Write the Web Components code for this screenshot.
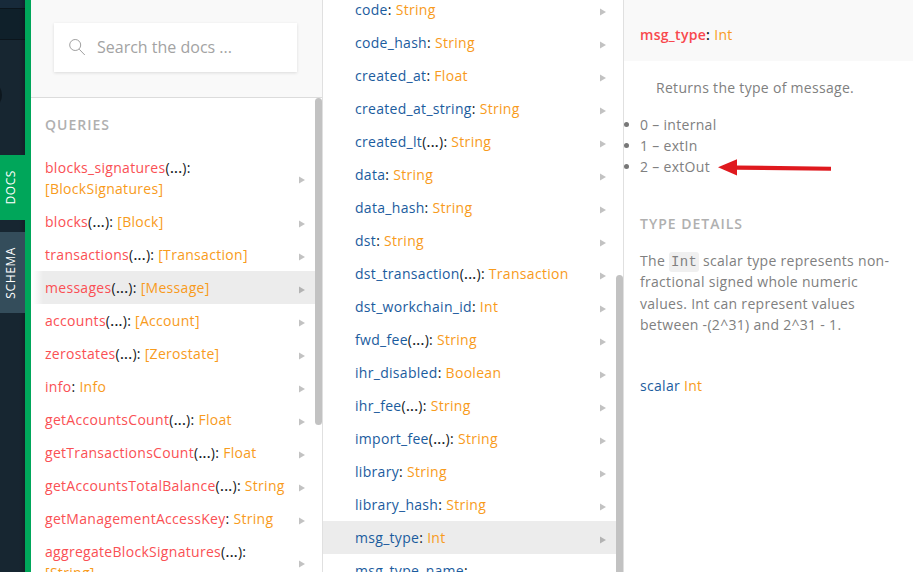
<!DOCTYPE html>
<html lang="en">
<head>
<meta charset="utf-8">
<title>Docs explorer</title>
<style>
html,body{margin:0;height:100%;overflow:hidden}
body{font-family:"Open Sans","Noto Sans",sans-serif;font-size:14px;line-height:21px;letter-spacing:.3px;color:#141823;
--field:#fa5054;--prop:#1b5c9e;--type:#f89b1c}
</style>
</head>
<body>
<docs-app></docs-app>
<script>
class Base extends HTMLElement{
  connectedCallback(){
    if(this.shadowRoot)return;
    this.attachShadow({mode:'open'}).innerHTML=this.render();
  }
}
customElements.define('side-tab',class extends Base{
  render(){return `<style>
  :host{display:flex;align-items:center;justify-content:center;width:25px;box-sizing:border-box;padding-right:3px;background:#344d5b;color:#fff;font-size:12px;line-height:18px;letter-spacing:.6px;font-weight:500}
  :host([active]){background:#00a65a}
  span{writing-mode:vertical-rl;transform:rotate(180deg)}
  </style><span><slot></slot></span>`}
});
customElements.define('side-rail',class extends Base{
  render(){return `<style>
  :host{display:flex;flex-direction:column;position:relative;width:25px;height:100%;background:linear-gradient(90deg,transparent 19px,rgba(0,0,0,.2)),linear-gradient(#172a3a 0 8px,#0b151c 8px 9px,#0f202a 9px 39px,#0b151c 39px 40px,#172631 40px);overflow:hidden;box-sizing:border-box;padding-top:155px;gap:12px}
  i{position:absolute;left:-26px;top:81px;width:28px;height:28px;border-radius:50%;background:#0d171e}
  .a{height:65px}.b{height:81px}
  </style><i></i><side-tab class="a" active>DOCS</side-tab><side-tab class="b">SCHEMA</side-tab>`}
});
customElements.define('search-box',class extends Base{
  render(){return `<style>
  :host{display:flex;box-sizing:border-box;height:98px;padding:23px 25px 25px 23px;background:#f9f9f9;border-bottom:1px solid #dcdcdc}
  .box{flex:1;height:49px;display:flex;align-items:center;background:#fff;box-shadow:0 1px 3px rgba(0,0,0,.12);font-size:16px;letter-spacing:0;color:#a3a3a3;box-sizing:border-box;padding:0 0 1px 14px;gap:10px}
  svg{width:19px;height:19px}
  </style><div class="box"><svg viewBox="0 0 19 19" fill="none" stroke="#a0a0a0" stroke-width="1"><circle cx="7.2" cy="7" r="5.5"/><path d="M11.2 11.2L16.8 17"/></svg><span><slot></slot></span></div>`}
});
customElements.define('section-title',class extends Base{
  render(){return `<style>:host{display:block;color:#b0b0b0;font-weight:600;font-size:14px;letter-spacing:1px;line-height:17px}</style><slot></slot>`}
});
/* One schema entry: name, optional arguments, type. */
customElements.define('field-row',class extends Base{
  render(){const a=this.getAttribute.bind(this);return `<style>
  :host{display:flex;align-items:center;justify-content:space-between;padding:6px 10px 6px var(--indent);box-sizing:border-box;flex:none}
  :host([selected]){background:var(--selected,#ececec)}
  .n{color:var(--name)}.t{color:var(--type)}
  svg{width:6px;height:8px;flex:none;margin-top:4px}
  </style><span><span class="n">${a('name')}</span>${this.hasAttribute('args')?'(<b style="font-weight:600;">...</b>)':''}: <span class="t">${a('type')}</span></span>
  <svg viewBox="0 0 6 8"><path d="M0 .5L6 4L0 7.5Z" fill="#000" fill-opacity=".24"/></svg>`}
});
const rows=(list,sel)=>list.trim().split('\n').map(l=>{const[n,t]=l.trim().split('|');const args=n.endsWith('+');const name=n.replace('+','');
  return `<field-row name="${name}" type="${t}"${args?' args':''}${name===sel?' selected':''}></field-row>`}).join('');
customElements.define('root-column',class extends Base{
  render(){return `<style>
  :host{display:flex;flex-direction:column;height:572px;border-right:1px solid #e0e0e0;box-sizing:border-box;overflow:hidden;background:#fff;--name:var(--field);--indent:14px;--selected:linear-gradient(90deg,#fff 2px,#ececec 12px)}
  .body{display:grid;grid-template-columns:1fr 7px;flex:1;min-height:0}
  .list{display:flex;flex-direction:column;min-width:0;overflow:hidden}
  section-title{padding:18px 14px 18px}
  .bar{height:327px;background:#c2c2c2;border-radius:4px}
  </style><search-box>Search the docs ...</search-box><div class="body"><div class="list"><section-title>QUERIES</section-title>${rows(`blocks_signatures+|[BlockSignatures]
  blocks+|[Block]
  transactions+|[Transaction]
  messages+|[Message]
  accounts+|[Account]
  zerostates+|[Zerostate]
  info|Info
  getAccountsCount+|Float
  getTransactionsCount+|Float
  getAccountsTotalBalance+|String
  getManagementAccessKey|String
  aggregateBlockSignatures+|[String]`,'messages')}</div><div class="bar"></div></div>`}
});
customElements.define('type-column',class extends Base{
  render(){return `<style>
  :host{display:grid;grid-template-columns:1fr 7px;height:572px;border-right:1px solid #e0e0e0;box-sizing:border-box;overflow:hidden;background:#fff;--name:var(--prop);--indent:32px}
  .list{display:flex;flex-direction:column;margin-top:-7px;min-width:0}
  .bar{margin-top:275px;height:320px;background:#c2c2c2;border-radius:4px}
  </style><div class="list">${rows(`code|String
  code_hash|String
  created_at|Float
  created_at_string|String
  created_lt+|String
  data|String
  data_hash|String
  dst|String
  dst_transaction+|Transaction
  dst_workchain_id|Int
  fwd_fee+|String
  ihr_disabled|Boolean
  ihr_fee+|String
  import_fee+|String
  library|String
  library_hash|String
  msg_type|Int
  msg_type_name|MessageMsgTypeNameEnum`,'msg_type')}</div><div class="bar"></div>`}
});
customElements.define('detail-column',class extends Base{
  render(){return `<style>
  :host{display:block;height:572px;overflow:hidden;background:#fff;color:#808080;position:relative}
  header{box-sizing:border-box;height:61px;padding:24px 16px 0;background:#f9f9f9;color:#141823;font-weight:600}
  .r{color:#f8484e}.t{color:var(--type)}.p{color:var(--prop)}
  p{margin:0}
  header .t{font-weight:500}
  .intro{padding:16px 32px 16px}
  ul{margin:0;padding:0 16px;list-style:none}
  li{display:flex;align-items:center}
  li::before{content:"";width:5px;height:5px;border-radius:50%;background:#777;margin-left:-16.5px;margin-right:11.5px;margin-top:-1px}
  section-title{padding:38px 16px 18px}
  .desc{padding:0 16px;line-height:21.3px}
  code{font-family:"Liberation Mono",monospace;font-size:14px;letter-spacing:.3px;line-height:16px;background:#f0f0f0;padding:2px 2px;border-radius:3px}
  .scalar{padding:40px 16px 0}
  svg{position:absolute;left:93px;top:157px;width:116px;height:20px}
  </style><header><span class="r">msg_type</span>: <span class="t">Int</span></header>
  <p class="intro">Returns the type of message.</p>
  <ul><li>0 – internal</li><li>1 – extIn</li><li>2 – extOut</li></ul>
  <section-title>TYPE DETAILS</section-title>
  <p class="desc">The <code>Int</code> scalar type represents non-<br>fractional signed whole numeric<br>values. Int can represent values<br>between -(2^31) and 2^31 - 1.</p>
  <p class="scalar"><span class="p">scalar</span> <span class="t">Int</span></p>
  <svg viewBox="0 0 116 20" fill="#df191e"><path d="M1 10.2L20 2.3V8.5L114 9.7V13.7L20 12.8V18.5Z"/></svg>`}
});
customElements.define('docs-app',class extends Base{
  render(){return `<style>
  :host{display:grid;grid-template-columns:25px 6px 292px 301px 1fr;width:913px;height:572px;overflow:hidden}
  .edge{background:#00a65a}
  </style><side-rail></side-rail><div class="edge"></div><root-column></root-column><type-column></type-column><detail-column></detail-column>`}
});
</script>
</body>
</html>
